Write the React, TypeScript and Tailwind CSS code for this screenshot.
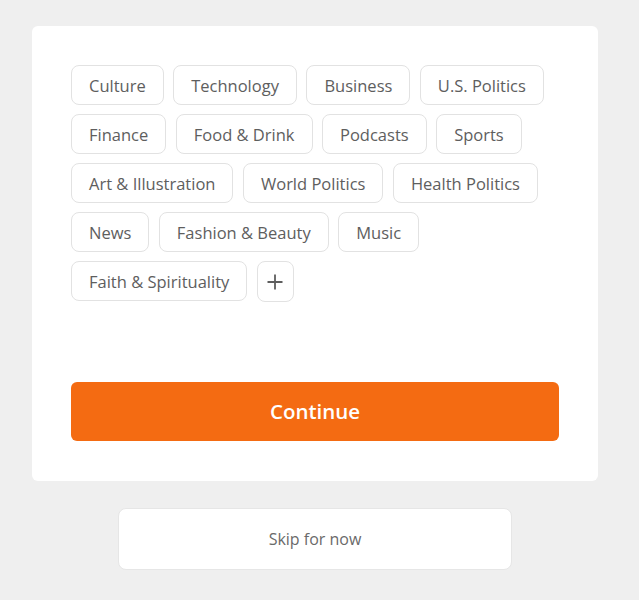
import React from 'react';

const topics = [
    'Culture',
    'Technology',
    'Business',
    'U.S. Politics',
    'Finance',
    'Food & Drink',
    'Podcasts',
    'Sports',
    'Art & Illustration',
    'World Politics',
    'Health Politics',
    'News',
    'Fashion & Beauty',
    'Music',
    'Faith & Spirituality',
];

export default function App() {
    return (
        <div className="min-h-[600px] w-[639px] bg-[#efefef] pt-[26px] font-['Open_Sans',sans-serif]">
            <div className="ml-[32px] w-[566px] rounded-md bg-white px-[39px] pb-[40px] pt-[39px]">
                <div className="flex flex-wrap gap-x-[9.5px] gap-y-[9px]">
                    {topics.map((t) => (
                        <button
                            key={t}
                            className="h-[40px] rounded-lg border border-[#e2e2e2] bg-white px-[17px] pt-[2px] text-[16.5px] text-[#5e5e5e]"
                        >
                            {t}
                        </button>
                    ))}
                    <button className="flex h-[41px] w-[37px] items-center justify-center rounded-lg border border-[#e2e2e2] bg-white text-[#5e5e5e]">
                        <svg width="18" height="18" viewBox="0 0 18 18" fill="none" stroke="currentColor" strokeWidth="1.8">
                            <path d="M9 1.5v15M1.5 9h15" />
                        </svg>
                    </button>
                </div>
                <button className="mt-[80px] flex h-[59px] w-full items-center justify-center rounded-md bg-[#f46b12] text-[20.5px] font-semibold text-white">
                    Continue
                </button>
            </div>
            <div className="ml-[118px] mt-[27px] flex h-[62px] w-[394px] items-center justify-center rounded-lg border border-[#e6e6e6] bg-white text-[16px] text-[#6a6a6a]">
                Skip for now
            </div>
        </div>
    );
}
